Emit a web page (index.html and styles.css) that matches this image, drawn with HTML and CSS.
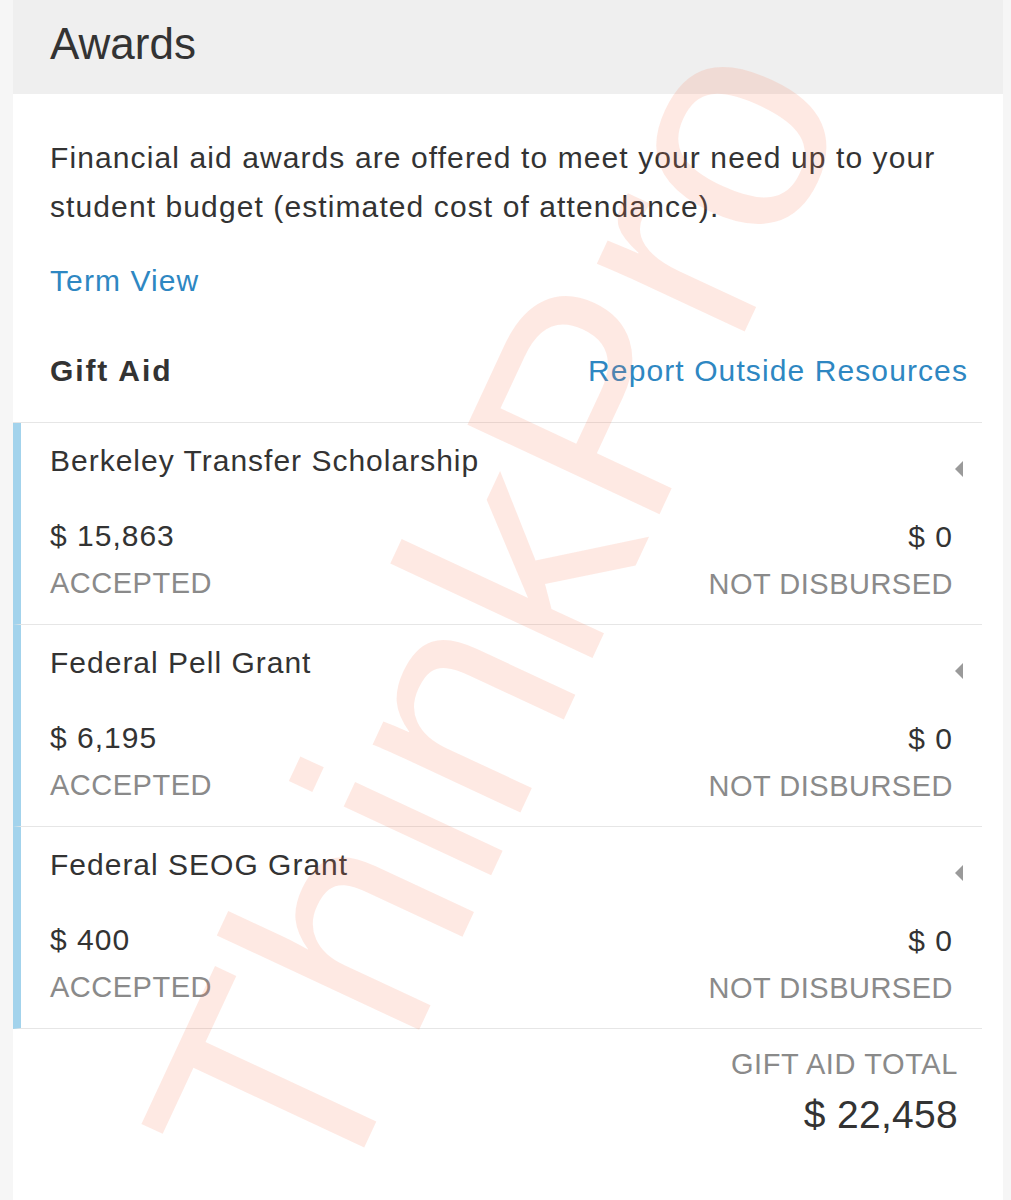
FILE: index.html
```html
<!DOCTYPE html>
<html lang="en">
<head>
<meta charset="utf-8">
<title>Awards</title>
<link rel="stylesheet" href="styles.css">
</head>
<body>
<div class="card">
  <div class="card-header"><h1 class="title">Awards</h1></div>
  <div class="card-body">
    <p class="intro">Financial aid awards are offered to meet your need up to your student budget (estimated cost of attendance).</p>
    <a class="link term-link" href="#">Term View</a>
    <div class="section-head">
      <h2 class="section-title">Gift Aid</h2>
      <a class="link" href="#">Report Outside Resources</a>
    </div>
    <ul class="awards">
      <li class="award">
        <div class="award-name">Berkeley Transfer Scholarship</div>
        <span class="caret"></span>
        <div class="award-grid">
          <div class="col">
            <div class="amount">$ 15,863</div>
            <div class="label">ACCEPTED</div>
          </div>
          <div class="col col-right">
            <div class="amount">$ 0</div>
            <div class="label">NOT DISBURSED</div>
          </div>
        </div>
      </li>
      <li class="award">
        <div class="award-name">Federal Pell Grant</div>
        <span class="caret"></span>
        <div class="award-grid">
          <div class="col">
            <div class="amount">$ 6,195</div>
            <div class="label">ACCEPTED</div>
          </div>
          <div class="col col-right">
            <div class="amount">$ 0</div>
            <div class="label">NOT DISBURSED</div>
          </div>
        </div>
      </li>
      <li class="award">
        <div class="award-name">Federal SEOG Grant</div>
        <span class="caret"></span>
        <div class="award-grid">
          <div class="col">
            <div class="amount">$ 400</div>
            <div class="label">ACCEPTED</div>
          </div>
          <div class="col col-right">
            <div class="amount">$ 0</div>
            <div class="label">NOT DISBURSED</div>
          </div>
        </div>
      </li>
    </ul>
    <div class="total">
      <div class="total-label">GIFT AID TOTAL</div>
      <div class="total-amount">$ 22,458</div>
    </div>
  </div>
  <div class="watermark">ThinkPro</div>
</div>
</body>
</html>
```
FILE: styles.css
```css
* { box-sizing: border-box; }

html, body {
  margin: 0;
  padding: 0;
}

body {
  background: #f6f6f6;
  font-family: "Liberation Sans", Arial, Helvetica, sans-serif;
  color: #333333;
  min-height: 1200px;
  overflow: hidden;
}

.card {
  position: relative;
  margin-left: 13px;
  width: 990px;
  min-height: 1200px;
  background: #ffffff;
}

.card-header {
  height: 94px;
  background: #efefef;
  display: flex;
  align-items: center;
  padding: 0 0 6px 37px;
}

.title {
  margin: 0;
  font-size: 44px;
  font-weight: normal;
  line-height: 1;
  color: #333333;
}

.card-body {
  padding: 39px 21px 40px 0;
}

.intro {
  margin: 0 0 25px 37px;
  max-width: 920px;
  font-size: 30px;
  letter-spacing: 1.1px;
  line-height: 49px;
}

.link {
  color: #2e87c2;
  text-decoration: none;
  font-size: 30px;
  letter-spacing: 1.1px;
  line-height: 49px;
}

.term-link {
  display: block;
  margin-left: 37px;
}

.section-head {
  display: flex;
  justify-content: space-between;
  align-items: baseline;
  margin-top: 41px;
  padding: 0 14px 27px 37px;
  border-bottom: 1px solid #e6e6e6;
}

.section-title {
  margin: 0;
  font-size: 30px;
  font-weight: bold;
  letter-spacing: 1.9px;
  line-height: 49px;
  color: #333333;
}

.awards {
  list-style: none;
  margin: 0;
  padding: 0;
}

.award {
  position: relative;
  border-left: 8px solid #a3d3ec;
  border-bottom: 1px solid #e6e6e6;
  padding: 18px 29px 20px 29px;
}

.award-name {
  font-size: 30px;
  letter-spacing: 1px;
  line-height: 40px;
  color: #333333;
}

.caret {
  position: absolute;
  right: 19px;
  top: 38px;
  width: 0;
  height: 0;
  border-top: 8px solid transparent;
  border-bottom: 8px solid transparent;
  border-right: 8px solid #9a9a9a;
}

.award-grid {
  display: flex;
  justify-content: space-between;
  margin-top: 35px;
}

.col-right {
  text-align: right;
  padding-top: 1px;
}

.amount {
  font-size: 30px;
  letter-spacing: 1px;
  line-height: 40px;
  color: #333333;
}

.label {
  margin-top: 7px;
  font-size: 29px;
  letter-spacing: 0.5px;
  line-height: 40px;
  color: #8a8a8a;
}

.total {
  text-align: right;
  padding: 15px 24px 0 0;
}

.total-label {
  font-size: 29px;
  letter-spacing: 0.6px;
  line-height: 40px;
  color: #8a8a8a;
}

.total-amount {
  margin-top: 8px;
  font-size: 39px;
  letter-spacing: 0.3px;
  line-height: 46px;
  color: #333333;
}

.watermark {
  position: absolute;
  left: 481px;
  top: 616px;
  transform: translate(-50%, -50%) rotate(-65deg);
  font-size: 308px;
  line-height: 1;
  white-space: nowrap;
  color: rgba(250, 125, 90, 0.17);
  pointer-events: none;
}
```
